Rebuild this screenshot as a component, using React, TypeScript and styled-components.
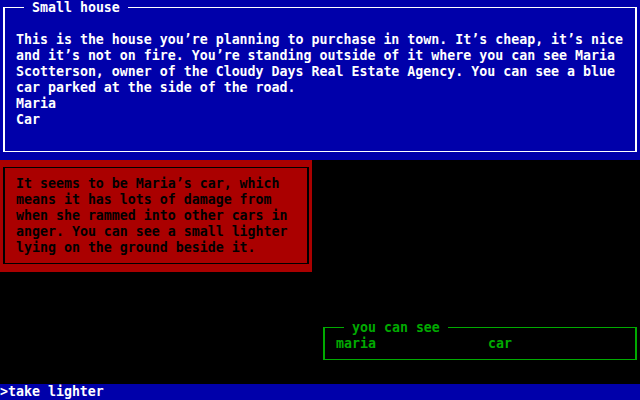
import React from "react";
import styled, { createGlobalStyle } from "styled-components";

const Global = createGlobalStyle`
  html, body { margin: 0; padding: 0; background: #000; }
  body { width: 640px; height: 400px; overflow: hidden; }
`;

const Screen = styled.div`
  width: 640px;
  height: 400px;
  background: #000;
  display: flex;
  flex-direction: column;
  font-family: "DejaVu Sans Mono", "Liberation Mono", monospace;
  font-weight: bold;
  font-size: 13.288px;
  line-height: 16px;
  white-space: pre;
`;

const Panel = styled.section<{ $bg: string; $w?: string; $h: number }>`
  background: ${(p) => p.$bg};
  width: ${(p) => p.$w ?? "100%"};
  height: ${(p) => p.$h}px;
  padding: 7px 3px 8px 3px;
  box-sizing: border-box;
  display: flex;
  flex-shrink: 0;
`;

const Frame = styled.div<{ $line: string; $fg: string; $pt: number }>`
  position: relative;
  flex: 1;
  min-width: 0;
  border-style: solid;
  border-color: ${(p) => p.$line};
  border-width: 1px 2px;
  color: ${(p) => p.$fg};
  padding: ${(p) => p.$pt}px 0 0 11px;
  display: flex;
  flex-direction: column;
`;

const Title = styled.div<{ $bg: string; $left: number }>`
  position: absolute;
  top: -8px;
  left: ${(p) => p.$left}px;
  height: 16px;
  background: ${(p) => p.$bg};
`;

const Line = styled.div`
  height: 16px;
`;

const Main = styled.div`
  height: 224px;
  display: flex;
  flex-direction: column;
  justify-content: space-between;
  padding-bottom: 16px;
  box-sizing: border-box;
`;

const SeeWrap = styled.div`
  align-self: flex-end;
  width: 320px;
`;

const ItemGrid = styled.div`
  display: grid;
  grid-template-columns: 152px 1fr;
`;

const InputBar = styled.div`
  height: 16px;
  background: #0000aa;
  color: #ffffff;
`;

const BLUE = "#0000aa";
const RED = "#aa0000";
const GREEN = "#00aa00";

const roomLines = [
  "This is the house you’re planning to purchase in town. It’s cheap, it’s nice",
  "and it’s not on fire. You’re standing outside of it where you can see Maria",
  "Scotterson, owner of the Cloudy Days Real Estate Agency. You can see a blue",
  "car parked at the side of the road.",
  "Maria",
  "Car",
];

const carLines = [
  "It seems to be Maria’s car, which",
  "means it has lots of damage from",
  "when she rammed into other cars in",
  "anger. You can see a small lighter",
  "lying on the ground beside it.",
];

export default function App() {
  return (
    <>
      <Global />
      <Screen>
        <Panel $bg={BLUE} $h={160}>
          <Frame $line="#ffffff" $fg="#ffffff" $pt={24}>
            <Title $bg={BLUE} $left={19}> Small house </Title>
            {roomLines.map((l, i) => (
              <Line key={i}>{l}</Line>
            ))}
          </Frame>
        </Panel>
        <Main>
          <Panel $bg={RED} $w="312px" $h={112}>
            <Frame $line="#000000" $fg="#000000" $pt={8}>
              {carLines.map((l, i) => (
                <Line key={i}>{l}</Line>
              ))}
            </Frame>
          </Panel>
          <SeeWrap>
            <Panel $bg="#000000" $h={48}>
              <Frame $line={GREEN} $fg={GREEN} $pt={8}>
                <Title $bg="#000000" $left={19}> you can see </Title>
                <ItemGrid>
                  <Line>maria</Line>
                  <Line>car</Line>
                </ItemGrid>
              </Frame>
            </Panel>
          </SeeWrap>
        </Main>
        <InputBar>&gt;take lighter</InputBar>
      </Screen>
    </>
  );
}
